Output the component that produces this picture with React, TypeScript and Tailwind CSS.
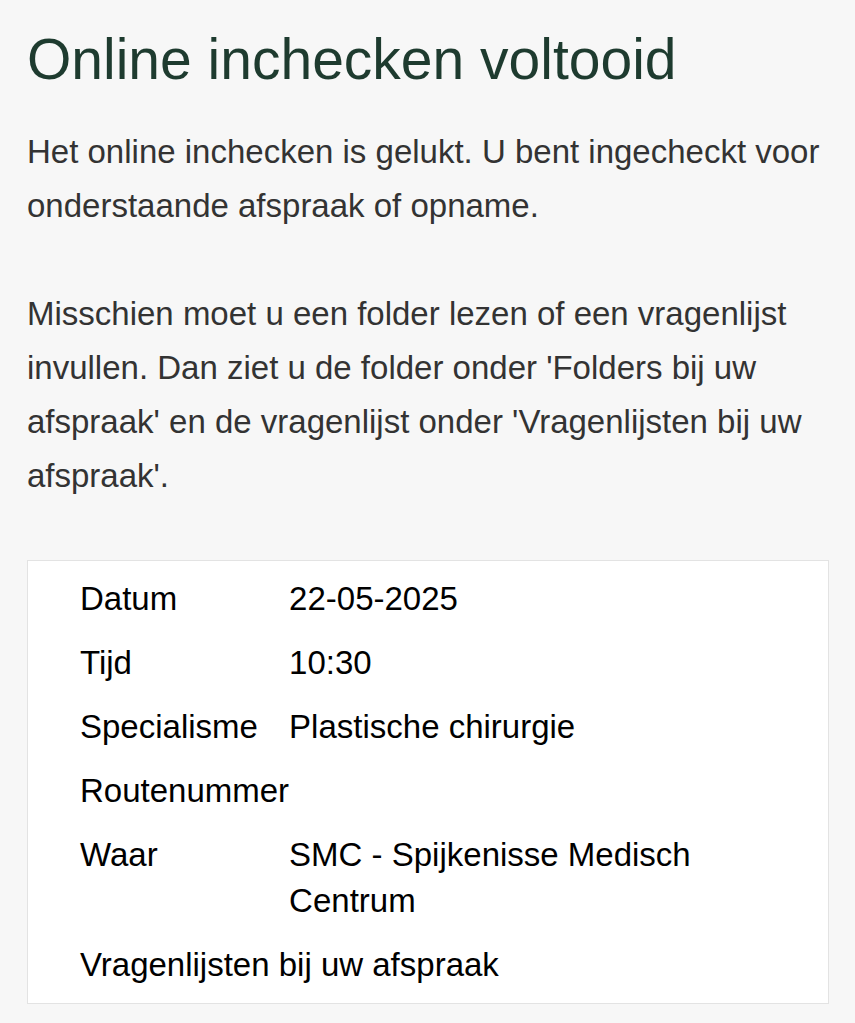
export default function App() {
  const rows: [string, string[]][] = [
    ["Datum", ["22-05-2025"]],
    ["Tijd", ["10:30"]],
    ["Specialisme", ["Plastische chirurgie"]],
    ["Routenummer", []],
    ["Waar", ["SMC - Spijkenisse Medisch", "Centrum"]],
  ];

  return (
    <div className="min-h-[1023px] bg-[#f7f7f7] px-[27px] pt-[23px] font-['Liberation_Sans',Arial,sans-serif]">
      <h1 className="text-[57px] leading-[72px] text-[#1e3b2f]">Online inchecken voltooid</h1>

      <div className="mt-[30px] text-[33px] leading-[54px] text-[#333333]">
        <p>
          Het online inchecken is gelukt. U bent ingecheckt voor onderstaande afspraak of opname.
        </p>
        <p className="mt-[54px]">
          Misschien moet u een folder lezen of een vragenlijst invullen. Dan ziet u de folder onder
          'Folders bij uw afspraak' en de vragenlijst onder 'Vragenlijsten bij uw afspraak'.
        </p>
      </div>

      <div className="mt-[57px] w-[802px] border border-[#e3e3e3] bg-white px-[52px] py-[6px] text-[33px] leading-[46px] text-black">
        <table className="border-collapse">
          <tbody>
            {rows.map(([label, value]) => (
              <tr key={label}>
                <td className="py-[9px] pr-0 align-top whitespace-nowrap">{label}</td>
                <td className="py-[9px] pl-0 align-top">
                  {value.map((line) => (
                    <div key={line}>{line}</div>
                  ))}
                </td>
              </tr>
            ))}
            <tr>
              <td colSpan={2} className="py-[9px]">
                Vragenlijsten bij uw afspraak
              </td>
            </tr>
          </tbody>
        </table>
      </div>
    </div>
  );
}
